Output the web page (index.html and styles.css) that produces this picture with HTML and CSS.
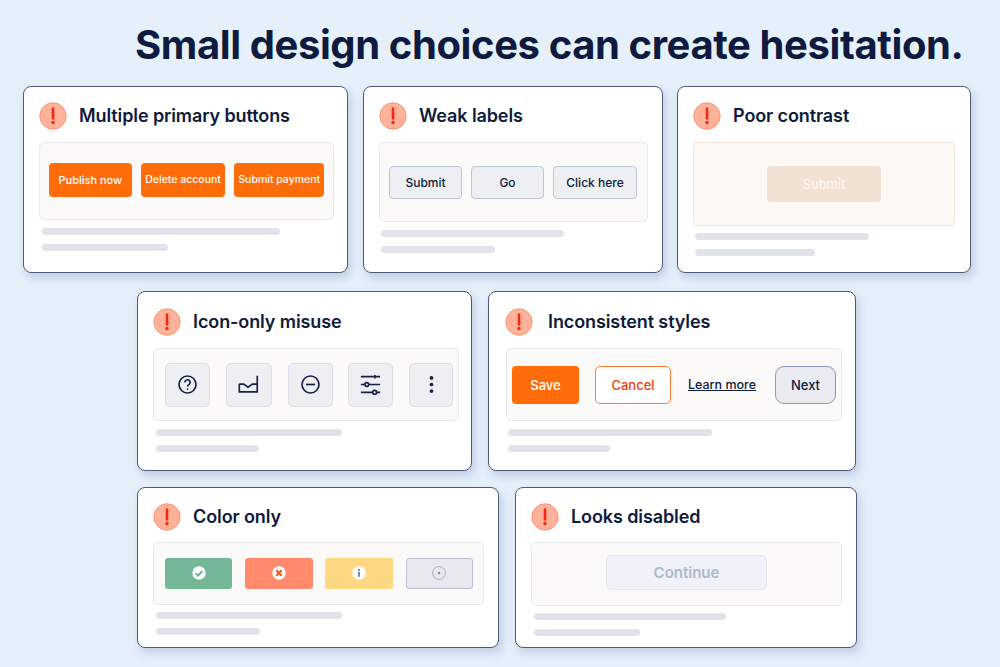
FILE: index.html
```html
<!DOCTYPE html>
<html lang="en">
<head>
<meta charset="utf-8">
<title>Small design choices can create hesitation.</title>
<link rel="stylesheet" href="styles.css">
</head>
<body>
<main class="page">
  <h1 class="headline">Small design choices can create hesitation.</h1>

  <section class="row row-1">
    <article class="card c1">
      <header class="card-head">
        <svg class="alert" viewBox="0 0 28 28"><circle cx="14" cy="14" r="13.2" fill="#ffb199" stroke="#fb9677" stroke-width="1"/><path d="M14 6.5v10" stroke="#f7280f" stroke-width="2.6" stroke-linecap="round"/><circle cx="14" cy="20.5" r="1.7" fill="#f7280f"/></svg>
        <h2>Multiple primary buttons</h2>
      </header>
      <div class="panel">
        <span class="btn primary small b1">Publish now</span>
        <span class="btn primary small b2">Delete account</span>
        <span class="btn primary small b3">Submit payment</span>
      </div>
      <div class="skeleton"><i class="long"></i><i class="short"></i></div>
    </article>

    <article class="card c2">
      <header class="card-head">
        <svg class="alert" viewBox="0 0 28 28"><circle cx="14" cy="14" r="13.2" fill="#ffb199" stroke="#fb9677" stroke-width="1"/><path d="M14 6.5v10" stroke="#f7280f" stroke-width="2.6" stroke-linecap="round"/><circle cx="14" cy="20.5" r="1.7" fill="#f7280f"/></svg>
        <h2>Weak labels</h2>
      </header>
      <div class="panel">
        <span class="btn weak b1">Submit</span>
        <span class="btn weak b2">Go</span>
        <span class="btn weak b3">Click here</span>
      </div>
      <div class="skeleton"><i class="long"></i><i class="short"></i></div>
    </article>

    <article class="card c3">
      <header class="card-head">
        <svg class="alert" viewBox="0 0 28 28"><circle cx="14" cy="14" r="13.2" fill="#ffb199" stroke="#fb9677" stroke-width="1"/><path d="M14 6.5v10" stroke="#f7280f" stroke-width="2.6" stroke-linecap="round"/><circle cx="14" cy="20.5" r="1.7" fill="#f7280f"/></svg>
        <h2>Poor contrast</h2>
      </header>
      <div class="panel">
        <span class="btn faint">Submit</span>
      </div>
      <div class="skeleton"><i class="long"></i><i class="short"></i></div>
    </article>
  </section>

  <section class="row row-2">
    <article class="card c4">
      <header class="card-head">
        <svg class="alert" viewBox="0 0 28 28"><circle cx="14" cy="14" r="13.2" fill="#ffb199" stroke="#fb9677" stroke-width="1"/><path d="M14 6.5v10" stroke="#f7280f" stroke-width="2.6" stroke-linecap="round"/><circle cx="14" cy="20.5" r="1.7" fill="#f7280f"/></svg>
        <h2>Icon-only misuse</h2>
      </header>
      <div class="panel">
        <span class="icon-btn b1"><svg viewBox="0 0 24 24" class="glyph"><circle cx="12" cy="12" r="9.7"/><path d="M9 9.6a3 3 0 1 1 4.6 2.5c-1 .7-1.6 1.2-1.6 2.3"/><circle class="dot" cx="12" cy="17.2" r="1"/></svg></span>
        <span class="icon-btn b2"><svg viewBox="0 0 24 24" class="glyph"><path d="M1.5 11v9.5h20.500V2"/><path d="M1.500 11.500h5l5 3.500 5-3.500h5"/></svg></span>
        <span class="icon-btn b3"><svg viewBox="0 0 24 24" class="glyph"><circle cx="12" cy="12" r="9.700"/><path d="M6.800 12h10.400"/></svg></span>
        <span class="icon-btn b4"><svg viewBox="0 0 24 24" class="glyph"><path d="M1 3h22M1 12h4.500M10 12h13M1 21h13.500M19 21h4"/><path d="M17 1v4"/><circle cx="7.800" cy="12" r="2.200"/><circle cx="16.800" cy="21" r="2.200"/></svg></span>
        <span class="icon-btn b5"><svg viewBox="0 0 24 24" class="glyph"><circle class="dot" cx="12" cy="4.500" r="2.100"/><circle class="dot" cx="12" cy="12" r="2.100"/><circle class="dot" cx="12" cy="19.500" r="2.100"/></svg></span>
      </div>
      <div class="skeleton"><i class="long"></i><i class="short"></i></div>
    </article>

    <article class="card c5">
      <header class="card-head">
        <svg class="alert" viewBox="0 0 28 28"><circle cx="14" cy="14" r="13.2" fill="#ffb199" stroke="#fb9677" stroke-width="1"/><path d="M14 6.5v10" stroke="#f7280f" stroke-width="2.6" stroke-linecap="round"/><circle cx="14" cy="20.5" r="1.7" fill="#f7280f"/></svg>
        <h2>Inconsistent styles</h2>
      </header>
      <div class="panel">
        <span class="btn primary save">Save</span>
        <span class="btn outline">Cancel</span>
        <a class="text-link" href="#">Learn more</a>
        <span class="btn next">Next</span>
      </div>
      <div class="skeleton"><i class="long"></i><i class="short"></i></div>
    </article>
  </section>

  <section class="row row-3">
    <article class="card c6">
      <header class="card-head">
        <svg class="alert" viewBox="0 0 28 28"><circle cx="14" cy="14" r="13.2" fill="#ffb199" stroke="#fb9677" stroke-width="1"/><path d="M14 6.5v10" stroke="#f7280f" stroke-width="2.6" stroke-linecap="round"/><circle cx="14" cy="20.5" r="1.7" fill="#f7280f"/></svg>
        <h2>Color only</h2>
      </header>
      <div class="panel">
        <span class="swatch green"><svg viewBox="0 0 14 14" class="mark"><circle cx="7" cy="7" r="6.700" fill="#fff"/><path d="M3.700 7.300l2.300 2.300 4.400-4.600" fill="none" stroke="#69b08e" stroke-width="1.900"/></svg></span>
        <span class="swatch red"><svg viewBox="0 0 14 14" class="mark"><circle cx="7" cy="7" r="6.700" fill="#fff"/><path d="M4.300 4.300l5.400 5.400M9.700 4.300l-5.400 5.400" fill="none" stroke="#f4560f" stroke-width="2"/></svg></span>
        <span class="swatch yellow"><svg viewBox="0 0 14 14" class="mark"><circle cx="7" cy="7" r="6.700" fill="#fff"/><circle cx="7" cy="3.900" r="1" fill="#5d6a85"/><path d="M7 6v4.800" stroke="#5d6a85" stroke-width="1.600"/></svg></span>
        <span class="swatch grey"><svg viewBox="0 0 14 14" class="mark"><circle cx="7" cy="7" r="6.400" fill="none" stroke="#a5aec6" stroke-width="1"/><circle cx="7" cy="7" r="1.300" fill="#7f89a3"/></svg></span>
      </div>
      <div class="skeleton"><i class="long"></i><i class="short"></i></div>
    </article>

    <article class="card c7">
      <header class="card-head">
        <svg class="alert" viewBox="0 0 28 28"><circle cx="14" cy="14" r="13.2" fill="#ffb199" stroke="#fb9677" stroke-width="1"/><path d="M14 6.5v10" stroke="#f7280f" stroke-width="2.6" stroke-linecap="round"/><circle cx="14" cy="20.5" r="1.7" fill="#f7280f"/></svg>
        <h2>Looks disabled</h2>
      </header>
      <div class="panel">
        <span class="btn disabled">Continue</span>
      </div>
      <div class="skeleton"><i class="long"></i><i class="short"></i></div>
    </article>
  </section>
</main>
</body>
</html>
```

FILE: styles.css
```css
* { box-sizing: border-box; }
html, body { margin: 0; height: 100%; }
body {
  background: #e6f0fb;
  font-family: Inter, "Liberation Sans", sans-serif;
  color: #0e1a3e;
  overflow: hidden;
}
.page { width: 1000px; height: 667px; padding-top: 20px; }
.headline {
  margin: 0 0 17px 135px;
  font-size: 40px;
  line-height: 49px;
  font-weight: 700;
  letter-spacing: -0.4px;
  white-space: nowrap;
  color: #0e1a3e;
}
.row { display: flex; }
.row-1 { padding-left: 23px; gap: 15px; height: 187px; margin-bottom: 18px; }
.row-2 { padding-left: 137px; gap: 16px; height: 180px; margin-bottom: 16px; }
.row-3 { padding-left: 137px; gap: 16px; height: 161px; }

.card {
  background: #fff;
  border: 1px solid #4f5a78;
  border-radius: 8px;
  box-shadow: 3px 5px 10px rgba(90, 120, 170, .28);
  padding: 15px 14px 0 15px;
  display: flex;
  flex-direction: column;
}
.c1 { width: 325px; }
.c2 { width: 300px; }
.c3 { width: 294px; margin-left: -1px; }
.c4 { width: 335px; }
.c5 { width: 368px; padding-left: 17px; }
.c6 { width: 362px; }
.c7 { width: 342px; padding-left: 15px; }

.card-head { display: flex; align-items: center; height: 28px; gap: 12px; margin-bottom: 12px; }
.c4 .card-head, .c5 .card-head { margin-top: 1px; margin-bottom: 12px; }
.c5 .card-head { margin-left: -1px; gap: 15px; }
.c6 .card-head, .c7 .card-head { margin-top: 0; margin-bottom: 11px; }
.alert { width: 28px; height: 28px; flex: none; }
.card-head h2 { margin: 0; font-size: 18px; line-height: 24px; font-weight: 600; letter-spacing: -0.1px; color: #0e1a3e; }

.panel {
  display: flex;
  align-items: center;
  background: #fbfaf8;
  border: 1px solid #e8e9ee;
  border-radius: 5px;
}
.c1 .panel { width: 295px; height: 78px; padding: 0 9px 3px; gap: 9px; }
.c2 .panel { width: 269px; height: 80px; padding: 0 9px; gap: 9px; }
.c3 .panel { width: 262px; height: 84px; justify-content: center; background: #fcf8f3; border-color: #f3e4d5; }
.c4 .panel { width: 306px; height: 73px; padding: 0 5px 0 11px; justify-content: space-between; }
.c5 .panel { width: 336px; height: 73px; padding: 0 5px; justify-content: space-between; }
.c6 .panel { width: 331px; height: 63px; padding: 0 10px 1px 11px; justify-content: space-between; }
.c7 .panel { width: 311px; height: 64px; justify-content: center; padding-bottom: 3px; }

.btn {
  display: flex;
  align-items: center;
  justify-content: center;
  font-size: 12px;
  font-weight: 500;
  border-radius: 4px;
  white-space: nowrap;
}
.primary { background: #ff6d0a; color: #fff; }
.small { height: 34px; font-size: 11px; }
.c1 .b1 { width: 84px; }
.c1 .b2 { width: 86px; font-size: 10.5px; }
.c1 .b3 { width: 91px; font-size: 10.5px; }
.weak { height: 33px; background: #eeeff3; border: 1px solid #bcc6da; color: #0e1a3e; }
.c2 .b1 { width: 73px; }
.c2 .b2 { width: 73px; }
.c2 .b3 { width: 84px; }
.faint { width: 114px; height: 36px; background: #f1e2d4; color: #fdfbf7; font-size: 13px; font-weight: 400; }

.icon-btn {
  display: flex;
  align-items: center;
  justify-content: center;
  height: 44px;
  background: #eeeff3;
  border: 1px solid #dcdfe8;
  border-radius: 5px;
}
.c4 .b1, .c4 .b3, .c4 .b4 { width: 45px; }
.c4 .b2 { width: 46px; }
.c4 .b5 { width: 44px; }
.glyph { width: 21px; height: 21px; fill: none; stroke: #14224a; stroke-width: 1.900; }
.glyph .dot { fill: #14224a; stroke: none; }

.save { width: 67px; height: 38px; font-size: 13px; }
.outline { width: 76px; height: 38px; background: #fff; border: 1px solid #ff7a33; color: #f4400a; font-size: 13px; border-radius: 5px; margin-left: 7px; }
.text-link { font-size: 12.500px; font-weight: 500; color: #0e1a3e; text-decoration: underline; margin-left: 8px; }
.next { width: 61px; height: 38px; background: #e9ebf0; border: 1px solid #8e98b4; border-radius: 9px; color: #0e1a3e; font-size: 13px; margin-left: 10px; }

.swatch { display: flex; align-items: center; justify-content: center; height: 31px; border-radius: 3px; }
.swatch.green { width: 67px; background: #74b797; }
.swatch.red { width: 68px; background: #ff8a6c; }
.swatch.yellow { width: 68px; background: #fed984; }
.swatch.grey { width: 67px; background: #e8e9ef; border: 1px solid #b9c0d4; }
.mark { width: 14px; height: 14px; }

.disabled { width: 161px; height: 35px; background: #eff2f8; border: 1px solid #e2e7f0; color: #b0b8cd; font-size: 15px; font-weight: 600; border-radius: 5px; }

.skeleton { display: flex; flex-direction: column; gap: 9px; padding: 8px 0 0 3px; }
.skeleton i { display: block; height: 7px; border-radius: 4px; background: #e1e3ea; }
.c1 .long { width: 238px; }
.c1 .short { width: 126px; }
.c2 .long { width: 183px; }
.c2 .short { width: 114px; }
.c2 .skeleton { padding-left: 2px; }
.c3 .skeleton { padding-left: 2px; padding-top: 7px; }
.c3 .long { width: 174px; }
.c3 .short { width: 120px; }
.c4 .long { width: 186px; }
.c4 .short { width: 103px; }
.c5 .skeleton { padding-left: 2px; }
.c5 .long { width: 204px; }
.c5 .short { width: 102px; }
.c6 .skeleton { padding-top: 7px; }
.c6 .long { width: 186px; }
.c6 .short { width: 104px; }
.c7 .skeleton { padding-top: 7px; }
.c7 .long { width: 192px; }
.c7 .short { width: 106px; }
```
